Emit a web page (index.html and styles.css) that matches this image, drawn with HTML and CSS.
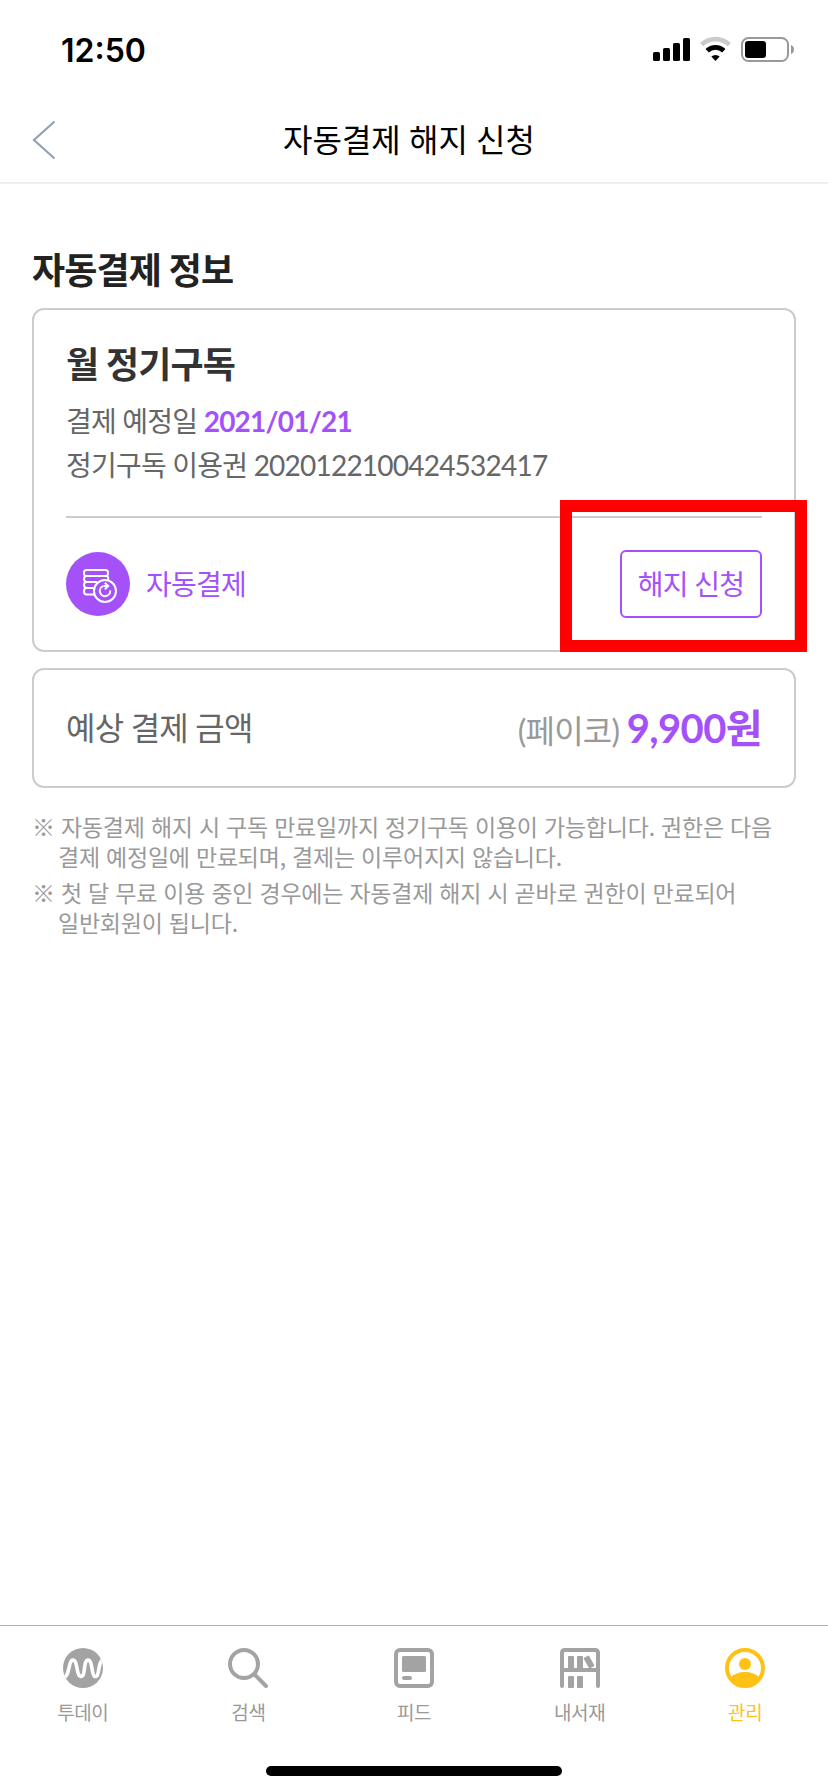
FILE: index.html
```html
<!DOCTYPE html>
<html lang="ko">
<head>
<meta charset="utf-8">
<meta name="viewport" content="width=device-width">
<title>자동결제 해지 신청</title>
<link rel="stylesheet" href="styles.css">
</head>
<body>
<div class="screen">
  <div class="status">
    <span class="time">12:50</span>
    <svg class="status-icons" width="142" height="28" viewBox="0 0 142 28">
      <rect x="0" y="16" width="7" height="9" rx="1.6"/>
      <rect x="10" y="12" width="7" height="13" rx="1.6"/>
      <rect x="20" y="7" width="7" height="18" rx="1.6"/>
      <rect x="30" y="2" width="7" height="23" rx="1.6"/>
      <path d="M48.600 8.600A20.500 20.500 0 0 1 76.400 8.600" fill="none" stroke="#cbcbcb" stroke-width="4.600"/>
      <path d="M54.200 14.700A12 12 0 0 1 70.800 14.700" fill="none" stroke="#000" stroke-width="4.800"/>
      <path d="M58.300 20.600a6.200 6.200 0 0 1 8.400 0L62.500 25z"/>
      <rect x="89" y="2" width="46" height="23" rx="6.500" fill="none" stroke="#999" stroke-width="2"/>
      <rect x="92" y="5" width="21" height="17" rx="3.200"/>
      <path d="M138 9c4 1.600 4 7.400 0 9z" fill="#999"/>
    </svg>
  </div>
  <header class="header">
    <svg class="back" width="24" height="40" viewBox="0 0 24 40"><path d="M22.500 1.500L2 20l20.500 18.500" fill="none" stroke="#94a0b3" stroke-width="2.200"/></svg>
    <h1 class="title">자동결제 해지 신청</h1>
  </header>
  <main class="content">
    <h2 class="section-title">자동결제 정보</h2>
    <section class="card plan">
      <h3 class="plan-name">월 정기구독</h3>
      <p class="plan-line">결제 예정일 <b class="accent">2021/01/21</b></p>
      <p class="plan-line">정기구독 이용권 2020122100424532417</p>
      <div class="plan-action">
        <svg class="coin" width="64" height="64" viewBox="0 0 64 64" fill="none" stroke="#fff" stroke-width="2">
          <circle cx="32" cy="32" r="32" fill="#a551fa" stroke="none"/>
          <rect x="18" y="18" width="24" height="6" rx="2.600"/>
          <path d="M41 24q2 1.500 1 4M20 24q-2 .5-2 3t2.600 3H31M20 30q-2 .5-2 3t2.600 3H28M20 36q-2 .5-2 3.500t2.600 3H28"/>
          <circle cx="39" cy="39" r="11"/>
          <path d="M37 34.200a5.200 5.200 0 1 0 7.200 4.200M37.500 34h4.500M38.800 30.800L42.200 34l-3.400 3.400"/>
        </svg>
        <span class="action-label">자동결제</span>
        <button class="cancel">해지 신청</button>
        <span class="highlight"></span>
      </div>
    </section>
    <section class="card amount">
      <span class="amount-label">예상 결제 금액</span>
      <span class="amount-value"><span class="payer">(페이코)</span> <b class="price">9,900원</b></span>
    </section>
    <ul class="notes">
      <li>※ 자동결제 해지 시 구독 만료일까지 정기구독 이용이 가능합니다. 권한은 다음<br>결제 예정일에 만료되며, 결제는 이루어지지 않습니다.</li>
      <li>※ 첫 달 무료 이용 중인 경우에는 자동결제 해지 시 곧바로 권한이 만료되어<br>일반회원이 됩니다.</li>
    </ul>
  </main>
  <nav class="tabs">
    <a class="tab">
      <svg width="40" height="40" viewBox="0 0 40 40"><clipPath id="disc"><circle cx="20" cy="20" r="20"/></clipPath><g clip-path="url(#disc)"><rect width="40" height="40" fill="#a3a3a3"/><path d="M0 29.500C7 30 5 12 10 12S13 28.500 18 28.500S20 12 25 12S28 28.500 32.500 28.500S34.500 12 41 11" fill="none" stroke="#fff" stroke-width="3.600"/></g></svg>
      <span>투데이</span>
    </a>
    <a class="tab">
      <svg width="40" height="40" viewBox="0 0 40 40" fill="none" stroke="#a3a3a3" stroke-width="4"><circle cx="16" cy="16" r="14"/><path d="M26.500 26.500L38 38" stroke-linecap="round"/></svg>
      <span>검색</span>
    </a>
    <a class="tab">
      <svg width="40" height="40" viewBox="0 0 40 40" fill="#a3a3a3"><rect x="2" y="2" width="36" height="36" rx="4" fill="none" stroke="#a3a3a3" stroke-width="4"/><rect x="8" y="8" width="24" height="16" rx="1.500"/><rect x="8" y="28" width="10" height="4" rx="2"/></svg>
      <span>피드</span>
    </a>
    <a class="tab">
      <svg width="40" height="40" viewBox="0 0 40 40" fill="#a3a3a3"><path d="M2 38V5q0-3 3-3h30q3 0 3 3v33M2 22h36" fill="none" stroke="#a3a3a3" stroke-width="4" stroke-linecap="round"/><rect x="8" y="8" width="6" height="13" rx=".8"/><rect x="17" y="8" width="6" height="13" rx=".8"/><rect x="26" y="8" width="6" height="12" rx=".8" transform="rotate(-29 29 14)"/><rect x="8" y="28" width="6" height="12" rx=".8"/><rect x="17" y="28" width="6" height="12" rx=".8"/></svg>
      <span>내서재</span>
    </a>
    <a class="tab active">
      <svg width="40" height="40" viewBox="0 0 40 40" fill="#ffc114"><circle cx="20" cy="20" r="18" fill="none" stroke="#ffc114" stroke-width="4"/><circle cx="20" cy="16" r="6"/><path d="M5.500 29.500Q11 24 20 24t14.500 5.500Q30 39 20 39T5.500 29.500z"/></svg>
      <span>관리</span>
    </a>
  </nav>
  <div class="home-bar"></div>
</div>
</body>
</html>
```
FILE: styles.css
```css
* { box-sizing: border-box; margin: 0; padding: 0; }
body { background: #fff; font-family: Lato, "Noto Sans CJK KR", sans-serif; color: #666; }
.screen { width: 828px; height: 1792px; display: flex; flex-direction: column; overflow: hidden; }
.status { height: 88px; padding: 36px 33px 0 61px; display: flex; justify-content: space-between; align-items: flex-start; }
.time { font: 600 32px/30px Inter, sans-serif; color: #000; }
.status-icons { display: block; }
.header { height: 96px; border-bottom: 2px solid #eee; padding: 10px 32px 0; display: grid; grid-template-columns: 24px 1fr 34px; align-items: start; }
.back { margin-top: 22px; }
.title { margin-top: 18px; font-size: 32px; line-height: 48px; font-weight: 400; color: #000; text-align: center; }
.content { flex: 1; padding: 62px 32px 0; }
.section-title { font-size: 36px; line-height: 48px; letter-spacing: -0.9px; color: #222; margin-bottom: 14px; }
.card { border: 2px solid #ccc; border-radius: 12px; padding: 0 32px; }
.plan { height: 344px; padding-top: 30px; }
.plan-name { font-size: 36px; line-height: 48px; letter-spacing: -0.9px; color: #333; margin-bottom: 11px; }
.plan-line { font-size: 28px; line-height: 44px; letter-spacing: -0.78px; }
.accent { color: #a551fa; }
.plan-action { position: relative; margin-top: 29px; border-top: 2px solid #ccc; padding-top: 32px; display: flex; align-items: center; font-size: 28px; letter-spacing: -0.75px; color: #a551fa; }
.action-label { margin-left: 16px; flex: 1; line-height: 40px; }
.cancel { width: 142px; height: 68px; padding-bottom: 2px; border: 2px solid #a551fa; border-radius: 6px; background: #fff; font: inherit; letter-spacing: inherit; color: inherit; }
.highlight { position: absolute; left: 494px; top: -18px; width: 247px; height: 152px; border: 12px solid #f00; }
.amount { height: 120px; margin-top: 16px; padding-bottom: 5px; display: flex; align-items: center; justify-content: space-between; font-size: 32px; letter-spacing: -0.8px; }
.payer { color: #999; }
.price { font-size: 40px; letter-spacing: -0.6px; color: #a551fa; }
.notes { list-style: none; margin-top: 23px; font-family: "Noto Sans CJK KR", sans-serif; font-size: 23px; line-height: 30px; letter-spacing: -0.23px; color: #999; white-space: nowrap; }
.notes li { padding-left: 26px; text-indent: -26px; margin-bottom: 6px; }
.tabs { height: 125px; border-top: 1px solid #b2b2b2; display: grid; grid-template-columns: repeat(5, 1fr); padding-top: 22px; }
.tab { display: flex; flex-direction: column; align-items: center; gap: 11px; font-size: 19px; line-height: 28px; letter-spacing: -0.4px; color: #999; }
.tab svg { display: block; }
.active { color: #ffc114; }
.home-bar { width: 296px; height: 10px; margin: 16px auto; border-radius: 5px; background: #000; }
```
